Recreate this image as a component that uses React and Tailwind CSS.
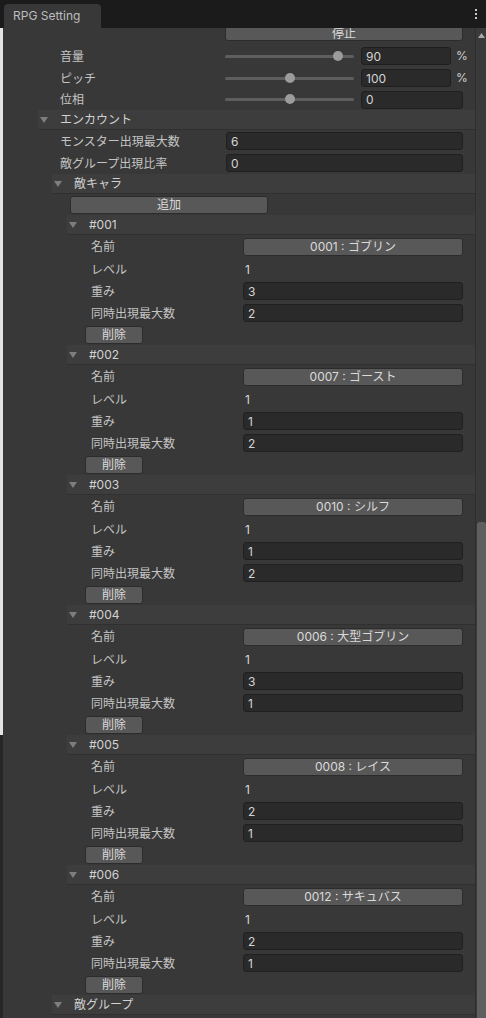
import React from "react";

const enemies = [
  { id: "#001", name: "0001 : ゴブリン", level: 1, weight: 3, max: 2 },
  { id: "#002", name: "0007 : ゴースト", level: 1, weight: 1, max: 2 },
  { id: "#003", name: "0010 : シルフ", level: 1, weight: 1, max: 2 },
  { id: "#004", name: "0006 : 大型ゴブリン", level: 1, weight: 3, max: 1 },
  { id: "#005", name: "0008 : レイス", level: 1, weight: 2, max: 1 },
  { id: "#006", name: "0012 : サキュバス", level: 1, weight: 2, max: 1 },
];

function Caret() {
  return (
    <svg width="8" height="6" viewBox="0 0 8 6" className="shrink-0">
      <polygon points="0,0 8,0 4,6" fill="#7e7e7e" />
    </svg>
  );
}

function Foldout({ indent, label }) {
  return (
    <div className={`flex h-[20px] ${indent}`}>
      <div className="flex flex-1 items-center gap-[12px] bg-[#3d3d3d] border-b border-[#303030] pl-[2px] text-[#d2d2d2]">
        <Caret />
        <span className="pt-[1px]">{label}</span>
      </div>
    </div>
  );
}

function Field({ value, className = "" }) {
  return (
    <div
      className={`h-[18px] flex items-center bg-[#2a2a2a] border border-[#1f1f1f] rounded-[3px] pl-[4px] pt-[1px] text-[#d4d4d4] ${className}`}
    >
      {value}
    </div>
  );
}

function Button({ label, className = "" }) {
  return (
    <div
      className={`h-[18px] flex items-center justify-center bg-[#585858] border border-[#2c2c2c] rounded-[3px] pt-[1px] text-[#dadada] ${className}`}
    >
      {label}
    </div>
  );
}

function SliderRow({ label, thumb, value, percent, height = "h-[22px]" }) {
  return (
    <div className={`flex items-center pl-[57px] ${height}`}>
      <span className="w-[165px] shrink-0 pt-[1px]">{label}</span>
      <div className="relative w-[129px] h-[3px] bg-[#5e5e5e] rounded-full shrink-0">
        <div className={`absolute top-[-4px] w-[10px] h-[10px] rounded-full bg-[#9c9c9c] ${thumb}`} />
      </div>
      {percent ? (
        <>
          <Field value={value} className="ml-[7px] w-[90px]" />
          <span className="ml-[5px] text-[#d0d0d0]">%</span>
        </>
      ) : (
        <Field value={value} className="ml-[7px] w-[102px]" />
      )}
    </div>
  );
}

function EnemyBlock({ enemy }) {
  return (
    <div className="flex flex-col">
      <Foldout indent="pl-[64px]" label={enemy.id} />
      <div className="flex items-center h-[23px] pl-[88px]">
        <span className="w-[152px] shrink-0 pt-[1px]">名前</span>
        <Button label={enemy.name} className="w-[220px]" />
      </div>
      <div className="flex items-center h-[22px] pl-[88px]">
        <span className="w-[152px] shrink-0 pt-[1px]">レベル</span>
        <span className="pl-[2px] pt-[1px] text-[#d8d8d8]">{enemy.level}</span>
      </div>
      <div className="flex items-center h-[22px] pl-[88px]">
        <span className="w-[152px] shrink-0 pt-[1px]">重み</span>
        <Field value={enemy.weight} className="w-[220px]" />
      </div>
      <div className="flex items-center h-[22px] pl-[88px]">
        <span className="w-[152px] shrink-0 pt-[1px]">同時出現最大数</span>
        <Field value={enemy.max} className="w-[220px]" />
      </div>
      <div className="flex items-center h-[21px] pl-[82px]">
        <Button label="削除" className="w-[58px]" />
      </div>
    </div>
  );
}

export default function App() {
  return (
    <div className='w-[486px] h-[1018px] overflow-hidden flex flex-col bg-[#1b1b1b] text-[12px] text-[#c4c4c4] font-[Inter,"Noto_Sans_CJK_JP",sans-serif]'>
      {/* tab bar */}
      <div className="h-[28px] flex items-end shrink-0">
        <div className="ml-[4px] h-[24px] w-[97px] bg-[#383838] rounded-t-[4px] flex items-center pl-[9px] text-[#bdbdbd]">
          RPG Setting
        </div>
        <div className="ml-auto mr-[9px] self-center flex flex-col gap-[2px]">
          <div className="w-[2px] h-[2px] bg-[#c8c8c8]" />
          <div className="w-[2px] h-[2px] bg-[#c8c8c8]" />
          <div className="w-[2px] h-[2px] bg-[#c8c8c8]" />
        </div>
      </div>

      <div className="flex flex-1 min-h-0">
        {/* left edge */}
        <div className="w-[3px] flex flex-col shrink-0">
          <div className="h-[707px] bg-[#e4e4e4]" />
          <div className="flex-1 bg-[#262626]" />
        </div>

        {/* panel */}
        <div className="flex-1 bg-[#383838] overflow-hidden">
          <div className="-mt-[3px] flex flex-col">
            <div className="h-[16px] pl-[222px] flex">
              <div className="w-[238px] h-[16px] flex items-center justify-center bg-[#585858] border border-[#2c2c2c] rounded-b-[3px] text-[#dadada] leading-[14px] pt-[1px]">
                停止
              </div>
            </div>
            <div className="h-[4px]" />
            <SliderRow label="音量" thumb="left-[108px]" value="90" percent />
            <SliderRow label="ピッチ" thumb="left-[60px]" value="100" percent />
            <SliderRow label="位相" thumb="left-[60px]" value="0" height="h-[21px]" />

            <Foldout indent="pl-[35px]" label="エンカウント" />
            <div className="flex items-center h-[22px] pl-[57px]">
              <span className="w-[166px] shrink-0 pt-[1px]">モンスター出現最大数</span>
              <Field value="6" className="w-[237px]" />
            </div>
            <div className="flex items-center h-[22px] pl-[57px]">
              <span className="w-[166px] shrink-0 pt-[1px]">敵グループ出現比率</span>
              <Field value="0" className="w-[237px]" />
            </div>

            <Foldout indent="pl-[49px]" label="敵キャラ" />
            <div className="flex items-center h-[21px] pl-[67px]">
              <Button label="追加" className="w-[198px]" />
            </div>

            {enemies.map((e) => (
              <EnemyBlock key={e.id} enemy={e} />
            ))}

            <Foldout indent="pl-[49px]" label="敵グループ" />
          </div>
        </div>

        {/* scrollbar */}
        <div className="w-[11px] shrink-0 flex flex-col bg-[#3a3a3a] border-l border-[#2e2e2e]">
          <div className="h-[14px] flex items-center justify-center">
            <svg width="7" height="5" viewBox="0 0 7 5">
              <polygon points="0,5 7,5 3.5,0" fill="#a8a8a8" />
            </svg>
          </div>
          <div className="h-[480px]" />
          <div className="flex-1 ml-[1px] bg-[#5f5f5f] rounded-t-[3px]" />
        </div>
      </div>
    </div>
  );
}
